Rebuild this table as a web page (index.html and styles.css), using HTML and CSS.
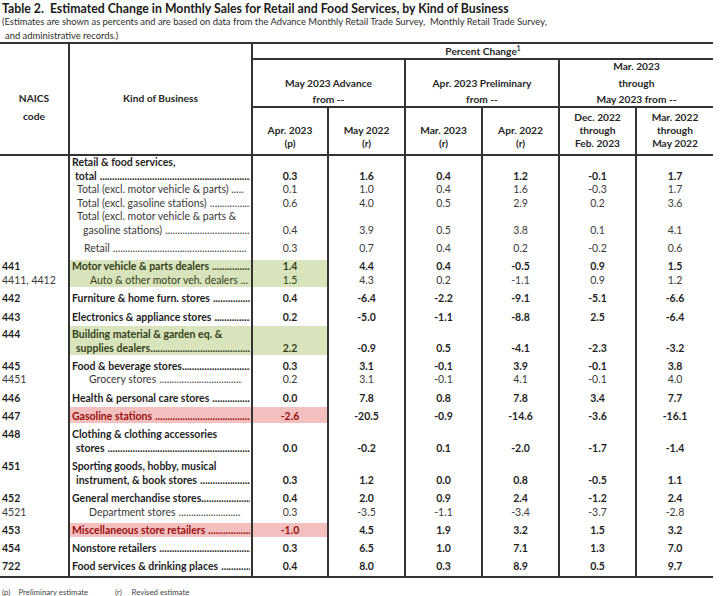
FILE: index.html
```html
<!DOCTYPE html>
<html>
<head>
<meta charset="utf-8">
<link rel="stylesheet" href="styles.css">
</head>
<body>
<div class="page">
  <div class="top">
    <div class="title">Table 2.  Estimated Change in Monthly Sales for Retail and Food Services, by Kind of Business</div>
    <div class="sub">(Estimates are shown as percents and are based on data from the Advance Monthly Retail Trade Survey,  Monthly Retail Trade Survey,</div>
    <div class="sub sub2">and administrative records.)</div>
  </div>

  <div class="thead">
    <div class="h-code">NAICS<br>code</div>
    <div class="h-kind bl">Kind of Business</div>
    <div class="h-pc bl">Percent Change<sup>1</sup></div>
    <div class="h-g1 grp bl bt">May 2023 Advance<br>from --</div>
    <div class="h-g2 grp bl bt">Apr. 2023 Preliminary<br>from --</div>
    <div class="h-g3 grp three bl bt"><span>Mar. 2023</span><span>through</span><span>May 2023 from --</span></div>
    <div class="sh c3 bl bt"><span>Apr. 2023</span><span>(p)</span></div>
    <div class="sh c4 bl bt"><span>May 2022</span><span>(r)</span></div>
    <div class="sh c5 bl bt"><span>Mar. 2023</span><span>(r)</span></div>
    <div class="sh c6 bl bt"><span>Apr. 2022</span><span>(r)</span></div>
    <div class="sh c7 bl bt"><span>Dec. 2022</span><span>through</span><span>Feb. 2023</span></div>
    <div class="sh c8 bl bt"><span>Mar. 2022</span><span>through</span><span>May 2022</span></div>
  </div>

  <div class="tbody">
    <div class="tr b lh135">
      <div class="code"></div>
      <div class="kind"><div class="ln">Retail &amp; food services,</div><div class="ln i3"><span>total</span><span class="dots sp"></span></div></div>
      <div class="val">0.3</div><div class="val">1.6</div><div class="val">0.4</div><div class="val">1.2</div><div class="val">-0.1</div><div class="val">1.7</div>
    </div>
    <div class="tr n lh135">
      <div class="code"></div>
      <div class="kind"><div class="ln i5">Total (excl. motor vehicle &amp; parts) .....</div></div>
      <div class="val">0.1</div><div class="val">1.0</div><div class="val">0.4</div><div class="val">1.6</div><div class="val">-0.3</div><div class="val">1.7</div>
    </div>
    <div class="tr n lh135">
      <div class="code"></div>
      <div class="kind"><div class="ln i5"><span>Total (excl. gasoline stations)</span><span class="dots sp"></span></div></div>
      <div class="val">0.6</div><div class="val">4.0</div><div class="val">0.5</div><div class="val">2.9</div><div class="val">0.2</div><div class="val">3.6</div>
    </div>
    <div class="tr n lh135">
      <div class="code"></div>
      <div class="kind"><div class="ln i5">Total (excl. motor vehicle &amp; parts &amp;</div><div class="ln i11"><span>gasoline stations)</span><span class="dots sp"></span></div></div>
      <div class="val">0.4</div><div class="val">3.9</div><div class="val">0.5</div><div class="val">3.8</div><div class="val">0.1</div><div class="val">4.1</div>
    </div>
    <div class="tr n pt4 pb4">
      <div class="code"></div>
      <div class="kind"><div class="ln i12"><span>Retail</span><span class="dots sp mr4"></span></div></div>
      <div class="val">0.3</div><div class="val">0.7</div><div class="val">0.4</div><div class="val">0.2</div><div class="val">-0.2</div><div class="val">0.6</div>
    </div>
    <div class="tr b lh135 pt1 bt1">
      <div class="code">441</div>
      <div class="kind g"><div class="ln"><span>Motor vehicle &amp; parts dealers</span><span class="dots sp"></span></div></div>
      <div class="val g">1.4</div><div class="val">4.4</div><div class="val">0.4</div><div class="val">-0.5</div><div class="val">0.9</div><div class="val">1.5</div>
    </div>
    <div class="tr n lh135">
      <div class="code">4411, 4412</div>
      <div class="kind g"><div class="ln i18">Auto &amp; other motor veh. dealers ...</div></div>
      <div class="val g">1.5</div><div class="val">4.3</div><div class="val">0.2</div><div class="val">-1.1</div><div class="val">0.9</div><div class="val">1.2</div>
    </div>
    <div class="tr b pt4">
      <div class="code">442</div>
      <div class="kind"><div class="ln"><span>Furniture &amp; home furn. stores</span><span class="dots sp"></span></div></div>
      <div class="val">0.4</div><div class="val">-6.4</div><div class="val">-2.2</div><div class="val">-9.1</div><div class="val">-5.1</div><div class="val">-6.6</div>
    </div>
    <div class="tr b pt5">
      <div class="code">443</div>
      <div class="kind"><div class="ln"><span>Electronics &amp; appliance stores</span><span class="dots sp"></span></div></div>
      <div class="val">0.2</div><div class="val">-5.0</div><div class="val">-1.1</div><div class="val">-8.8</div><div class="val">2.5</div><div class="val">-6.4</div>
    </div>
    <div class="tr b pt3 bt2">
      <div class="code">444</div>
      <div class="kind g"><div class="ln">Building material &amp; garden eq. &amp;</div><div class="ln i4"><span>supplies dealers</span><span class="dots"></span></div></div>
      <div class="val g">2.2</div><div class="val">-0.9</div><div class="val">0.5</div><div class="val">-4.1</div><div class="val">-2.3</div><div class="val">-3.2</div>
    </div>
    <div class="tr b pt4">
      <div class="code">445</div>
      <div class="kind"><div class="ln"><span>Food &amp; beverage stores</span><span class="dots"></span></div></div>
      <div class="val">0.3</div><div class="val">3.1</div><div class="val">-0.1</div><div class="val">3.9</div><div class="val">-0.1</div><div class="val">3.8</div>
    </div>
    <div class="tr n lh13">
      <div class="code">4451</div>
      <div class="kind"><div class="ln i17"><span>Grocery stores</span><span class="dots sp mr9"></span></div></div>
      <div class="val">0.2</div><div class="val">3.1</div><div class="val">-0.1</div><div class="val">4.1</div><div class="val">-0.1</div><div class="val">4.0</div>
    </div>
    <div class="tr b pt5">
      <div class="code">446</div>
      <div class="kind"><div class="ln"><span>Health &amp; personal care stores</span><span class="dots sp"></span></div></div>
      <div class="val">0.0</div><div class="val">7.8</div><div class="val">0.8</div><div class="val">7.8</div><div class="val">3.4</div><div class="val">7.7</div>
    </div>
    <div class="tr b pt4 bt2">
      <div class="code">447</div>
      <div class="kind r"><div class="ln"><span>Gasoline stations</span><span class="dots sp"></span></div></div>
      <div class="val r">-2.6</div><div class="val">-20.5</div><div class="val">-0.9</div><div class="val">-14.6</div><div class="val">-3.6</div><div class="val">-16.1</div>
    </div>
    <div class="tr b pt4">
      <div class="code">448</div>
      <div class="kind"><div class="ln">Clothing &amp; clothing accessories</div><div class="ln i4"><span>stores</span><span class="dots sp"></span></div></div>
      <div class="val">0.0</div><div class="val">-0.2</div><div class="val">0.1</div><div class="val">-2.0</div><div class="val">-1.7</div><div class="val">-1.4</div>
    </div>
    <div class="tr b pt4">
      <div class="code">451</div>
      <div class="kind"><div class="ln">Sporting goods, hobby, musical</div><div class="ln i4"><span>instrument, &amp; book stores</span><span class="dots sp"></span></div></div>
      <div class="val">0.3</div><div class="val">1.2</div><div class="val">0.0</div><div class="val">0.8</div><div class="val">-0.5</div><div class="val">1.1</div>
    </div>
    <div class="tr b pt4">
      <div class="code">452</div>
      <div class="kind"><div class="ln"><span>General merchandise stores</span><span class="dots"></span></div></div>
      <div class="val">0.4</div><div class="val">2.0</div><div class="val">0.9</div><div class="val">2.4</div><div class="val">-1.2</div><div class="val">2.4</div>
    </div>
    <div class="tr n">
      <div class="code">4521</div>
      <div class="kind"><div class="ln i17"><span>Department stores</span><span class="dots sp mr10"></span></div></div>
      <div class="val">0.3</div><div class="val">-3.5</div><div class="val">-1.1</div><div class="val">-3.4</div><div class="val">-3.7</div><div class="val">-2.8</div>
    </div>
    <div class="tr b pt4 bt4">
      <div class="code">453</div>
      <div class="kind r"><div class="ln"><span>Miscellaneous store retailers</span><span class="dots sp"></span></div></div>
      <div class="val r">-1.0</div><div class="val">4.5</div><div class="val">1.9</div><div class="val">3.2</div><div class="val">1.5</div><div class="val">3.2</div>
    </div>
    <div class="tr b pt4">
      <div class="code">454</div>
      <div class="kind"><div class="ln"><span>Nonstore retailers</span><span class="dots sp"></span></div></div>
      <div class="val">0.3</div><div class="val">6.5</div><div class="val">1.0</div><div class="val">7.1</div><div class="val">1.3</div><div class="val">7.0</div>
    </div>
    <div class="tr b pt4 pb3">
      <div class="code">722</div>
      <div class="kind"><div class="ln"><span>Food services &amp; drinking places</span><span class="dots sp"></span></div></div>
      <div class="val">0.4</div><div class="val">8.0</div><div class="val">0.3</div><div class="val">8.9</div><div class="val">0.5</div><div class="val">9.7</div>
    </div>
  </div>

  <div class="foot"><span class="fk">(p)</span><span class="fl">Preliminary estimate</span><span class="fk">(r)</span><span>Revised estimate</span></div>
</div>
</body>
</html>
```

FILE: styles.css
```css
* { box-sizing: border-box; margin: 0; padding: 0; }
body { margin: 0; background: #fff; font-family: Lato, "Open Sans", sans-serif; color: #1f1f1f; }
.page { width: 722px; height: 596px; overflow: hidden; }

.top { height: 42px; padding-left: 2px; }
.title { font-weight: 700; font-size: 12.3px; line-height: 12px; padding-top: 3px; white-space: pre; color: #1a1a1a; }
.sub { font-size: 9.4px; line-height: 14px; color: #2e2e2e; white-space: pre; }
.sub2 { padding-left: 3px; }

.thead {
  display: grid;
  grid-template-columns: 68px 183px 76px 77px 77px 77px 77px 78px;
  grid-template-rows: 14px 48px 48px;
  width: 713px;
  border-top: 2px solid #333;
  border-bottom: 2px solid #333;
  font-weight: 700;
  font-size: 10.2px;
  text-align: center;
  color: #262626;
}
.bl { border-left: 2px solid #333; }
.bt { border-top: 2px solid #333; }
.h-code { grid-column: 1; grid-row: 1 / 4; padding-top: 45px; line-height: 18px; }
.h-kind { grid-column: 2; grid-row: 1 / 4; padding-top: 45px; line-height: 18px; }
.h-pc { grid-column: 3 / 9; grid-row: 1; line-height: 14px; }
.h-pc sup { font-size: 6.5px; line-height: 0; vertical-align: 4px; }
.h-g1 { grid-column: 3 / 5; grid-row: 2; }
.h-g2 { grid-column: 5 / 7; grid-row: 2; }
.h-g3 { grid-column: 7 / 9; grid-row: 2; }
.grp { line-height: 16.5px; padding-top: 14.5px; }
.grp.three { padding-top: 0; display: flex; flex-direction: column; justify-content: center; }
.sh { grid-row: 3; line-height: 13px; display: flex; flex-direction: column; justify-content: flex-end; padding-bottom: 4px; }
.c3 { grid-column: 3; } .c4 { grid-column: 4; } .c5 { grid-column: 5; }
.c6 { grid-column: 6; } .c7 { grid-column: 7; } .c8 { grid-column: 8; }

.tbody { width: 713px; border-bottom: 2px solid #333; }
.tr {
  display: grid;
  grid-template-columns: 68px 183px 76px 77px 77px 77px 77px 78px;
  font-size: 10.5px;
  line-height: 14px;
}
.tr > div { padding-top: var(--pt, 0px); padding-bottom: var(--pb, 0px); }
.tr > div + div { border-left: 2px solid #333; }
.lh135 { line-height: 13.5px; }
.lh13 { line-height: 13px; }
.pt1 { --pt: 1px; } .pt3 { --pt: 3px; } .pt4 { --pt: 4px; } .pt5 { --pt: 5px; }
.pb3 { --pb: 3px; } .pb4 { --pb: 4px; }
.bt1 { --bt: 1px; } .bt2 { --bt: 2px; } .bt4 { --bt: 4px; }

.b { font-weight: 700; color: #1f1f1f; }
.n { font-weight: 400; color: #3a3a3a; }

.code { padding-left: 2px; white-space: nowrap; }
.kind { display: flex; flex-direction: column; }
.ln { display: flex; padding-left: 2px; white-space: nowrap; }
.ln > span:first-child { flex: none; }
.i3 { padding-left: 5px; } .i4 { padding-left: 6px; } .i5 { padding-left: 7px; }
.i11 { padding-left: 13px; } .i12 { padding-left: 14px; }
.i17 { padding-left: 19px; } .i18 { padding-left: 20px; }
.dots { flex: 1 1 0; min-width: 0; overflow: hidden; white-space: nowrap; margin-right: 1px; }
.dots::after { content: "................................................................................................................................................................"; }
.dots.sp { margin-left: 3px; }
.mr4 { margin-right: 4px; } .mr9 { margin-right: 9px; } .mr10 { margin-right: 10px; }

.val { display: flex; flex-direction: column; justify-content: flex-end; text-align: center; }

.g, .r { background-repeat: no-repeat; background-position: 0 var(--bt, 0px); background-size: 100% 100%; }
.g { background-image: linear-gradient(#d8e4bc, #d8e4bc); color: #34421a; }
.r { background-image: linear-gradient(#f3bfbf, #f3bfbf); color: #9a1010; }

.foot { padding: 7px 0 0 2px; font-size: 7.8px; line-height: 14px; color: #444; white-space: nowrap; }
.fk { display: inline-block; width: 16.5px; }
.fl { display: inline-block; width: 96.5px; }
```
